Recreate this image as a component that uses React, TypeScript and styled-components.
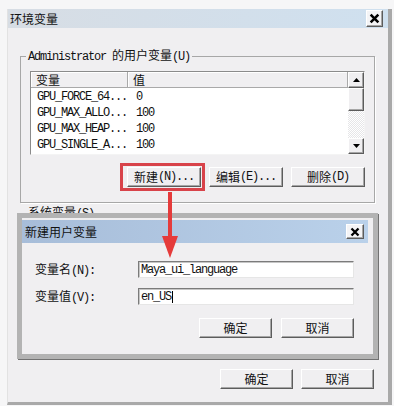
import React from "react";
import styled, { createGlobalStyle } from "styled-components";

const GlobalStyle = createGlobalStyle`
  html, body {
    margin: 0;
    padding: 0;
  }
  body {
    width: 394px;
    height: 406px;
    overflow: hidden;
    background: #f6f6f7;
    font-family: "Noto Sans CJK SC", "Liberation Sans", sans-serif;
    font-size: 12px;
    color: #111;
  }
`;

const Han = styled.span`
  font-family: "Noto Sans CJK SC", sans-serif;
  font-size: 12px;
`;

const Half = styled.span`
  font-family: "Liberation Mono", "DejaVu Sans Mono", monospace;
  font-size: 12px;
  letter-spacing: -1.2px;
`;

// SimSun look: CJK full width 12px, latin half width 6px
const Txt = ({ children }: { children: string }) => (
  <>
    {children
      .split(/([\u4e00-\u9fff]+)/)
      .filter(Boolean)
      .map((part, i) =>
        /[\u4e00-\u9fff]/.test(part) ? (
          <Han key={i}>{part}</Han>
        ) : (
          <Half key={i}>{part}</Half>
        )
      )}
  </>
);

const raised = `
  background: #f0eff1;
  border: 1px solid;
  border-color: #ffffff #5c5c5c #5c5c5c #ffffff;
  box-shadow: inset -1px -1px 0 #a6a6a6;
  box-sizing: border-box;
`;

const Window = styled.div`
  position: relative;
  margin: 9px 0 0 7px;
  width: 380px;
  height: 393px;
  border-left: 1px solid #e2e2e2;
  border-right: 4px solid #a9a9a9;
  border-bottom: 3px solid #a9a9a9;
  background: #f0eff1;
  display: flex;
  flex-direction: column;
`;

const TitleBar = styled.div`
  height: 19px;
  display: flex;
  align-items: center;
  justify-content: space-between;
  padding: 0 5px 0 2px;
  background: linear-gradient(90deg, #d7dde4, #cfe0ef);
  line-height: 14px;
`;

const CloseButton = styled.div<{ $w: number; $h: number }>`
  ${raised}
  width: ${(p) => p.$w}px;
  height: ${(p) => p.$h}px;
  display: flex;
  align-items: center;
  justify-content: center;
  background: #f4f4f6;
`;

const Group = styled.fieldset<{ $top: number; $height?: number }>`
  margin: ${(p) => p.$top}px 13px 0 12px;
  padding: 7px 9px 15px 9px;
  border: 1px solid #a7a7a7;
  box-shadow: 1px 1px 0 #ffffff;
  min-width: 0;
  box-sizing: border-box;
  ${(p) => (p.$height ? `height: ${p.$height}px;` : "")}
`;

const Legend = styled.legend`
  padding: 0 2px;
  margin-left: -4px;
  line-height: 14px;
`;

const List = styled.div`
  height: 84px;
  box-sizing: border-box;
  display: flex;
  border: 1px solid;
  border-color: #8b8b8b #f4f4f4 #f4f4f4 #8b8b8b;
  background: #fff;
`;

const ListMain = styled.div`
  flex: 1;
  display: flex;
  flex-direction: column;
`;

const HeaderRow = styled.div`
  display: grid;
  grid-template-columns: 97px 1fr;
  height: 15px;
  background: #f0eff1;
  border-bottom: 1px solid #a9a9a9;
`;

const HeaderCell = styled.div`
  display: flex;
  align-items: center;
  padding-left: 5px;
  border-right: 1px solid #a9a9a9;
  box-shadow: inset 1px 1px 0 #fff;
  line-height: 14px;
`;

const Row = styled.div`
  display: grid;
  grid-template-columns: 97px 1fr;
  height: 16px;
  align-items: center;
  &:first-of-type {
    margin-top: 2px;
  }
`;

const Cell = styled.div<{ $pad: number }>`
  padding-left: ${(p) => p.$pad}px;
  line-height: 14px;
  white-space: nowrap;
`;

const ScrollBar = styled.div`
  width: 16px;
  display: flex;
  flex-direction: column;
`;

const ScrollButton = styled.div`
  ${raised}
  height: 16px;
  display: flex;
  align-items: center;
  justify-content: center;
`;

const Thumb = styled.div`
  ${raised}
  height: 23px;
`;

const Track = styled.div`
  flex: 1;
  background: repeating-conic-gradient(#ffffff 0 25%, #e6e6e8 0 50%) 0 0 / 2px 2px;
`;

const ButtonRow = styled.div<{ $gap: number }>`
  display: flex;
  justify-content: flex-end;
  gap: ${(p) => p.$gap}px;
`;

const Button = styled.div<{ $w: number }>`
  ${raised}
  width: ${(p) => p.$w}px;
  height: 20px;
  display: flex;
  align-items: center;
  justify-content: center;
  line-height: 14px;
`;

const Highlight = styled.div`
  position: relative;
  &::after {
    content: "";
    position: absolute;
    top: -4px;
    left: -7px;
    right: -4px;
    bottom: -4px;
    border: 3px solid #d8434a;
  }
`;

const FooterRow = styled(ButtonRow)`
  margin: 12px 14px 0 0;
`;

const Dialog = styled.div`
  position: absolute;
  left: 9px;
  top: 204px;
  width: 361px;
  height: 146px;
  box-sizing: border-box;
  border: 5px solid #b3b3b3;
  box-shadow: 1px 1px 0 #727272;
  background: #f0eff1;
  padding: 2px 5px 0 0;
  display: flex;
  flex-direction: column;
`;

const DialogTitle = styled.div`
  height: 23px;
  display: flex;
  align-items: center;
  justify-content: space-between;
  padding: 0 4px 0 3px;
  background: linear-gradient(90deg, #a7bdd9, #bad1ea);
  line-height: 14px;
`;

const DialogBody = styled.div`
  padding: 18px 14px 0 13px;
  display: flex;
  flex-direction: column;
`;

const Fields = styled.div`
  display: grid;
  grid-template-columns: 103px 216px;
  row-gap: 10px;
  align-items: center;
  margin-bottom: 13px;
`;

const Label = styled.div`
  line-height: 14px;
`;

const Input = styled.div`
  height: 17px;
  box-sizing: border-box;
  background: #fff;
  border: 1px solid;
  border-color: #7b7b7b #e6e6e6 #e6e6e6 #7b7b7b;
  box-shadow: inset 1px 1px 0 #c6c6c6;
  padding-left: 2px;
  display: flex;
  align-items: center;
  line-height: 14px;
`;

const Caret = styled.span`
  display: inline-block;
  width: 1px;
  height: 12px;
  margin-left: 1px;
  background: #000;
`;

const Arrow = styled.svg`
  position: absolute;
  left: 152px;
  top: 181px;
  z-index: 2;
`;

const CloseIcon = ({ size }: { size: number }) => (
  <svg width={size} height={size} viewBox="0 0 10 10">
    <path d="M1.5 1.5 L8.5 8.5 M8.5 1.5 L1.5 8.5" stroke="#000" strokeWidth="2.3" />
  </svg>
);

const Tri = ({ up }: { up?: boolean }) => (
  <svg width="7" height="4" viewBox="0 0 7 4">
    <path d={up ? "M0 4 L3.5 0 L7 4Z" : "M0 0 L3.5 4 L7 0Z"} fill="#000" />
  </svg>
);

const rows = [
  ["GPU_FORCE_64...", "0"],
  ["GPU_MAX_ALLO...", "100"],
  ["GPU_MAX_HEAP...", "100"],
  ["GPU_SINGLE_A...", "100"],
];

export default function App() {
  return (
    <>
      <GlobalStyle />
      <Window>
        <TitleBar>
          <Txt>环境变量</Txt>
          <CloseButton $w={17} $h={17}>
            <CloseIcon size={11} />
          </CloseButton>
        </TitleBar>

        <Group $top={20}>
          <Legend>
            <Txt>Administrator 的用户变量(U)</Txt>
          </Legend>
          <List>
            <ListMain>
              <HeaderRow>
                <HeaderCell>
                  <Txt>变量</Txt>
                </HeaderCell>
                <HeaderCell>
                  <Txt>值</Txt>
                </HeaderCell>
              </HeaderRow>
              {rows.map(([name, value]) => (
                <Row key={name}>
                  <Cell $pad={6}>
                    <Txt>{name}</Txt>
                  </Cell>
                  <Cell $pad={8}>
                    <Txt>{value}</Txt>
                  </Cell>
                </Row>
              ))}
            </ListMain>
            <ScrollBar>
              <ScrollButton>
                <Tri up />
              </ScrollButton>
              <Thumb />
              <Track />
              <ScrollButton>
                <Tri />
              </ScrollButton>
            </ScrollBar>
          </List>
          <ButtonRow $gap={8} style={{ marginTop: 12 }}>
            <Highlight>
              <Button $w={74}>
                <Txt>新建(N)...</Txt>
              </Button>
            </Highlight>
            <Button $w={74}>
              <Txt>编辑(E)...</Txt>
            </Button>
            <Button $w={74}>
              <Txt>删除(D)</Txt>
            </Button>
          </ButtonRow>
        </Group>

        <Group $top={2} $height={152}>
          <Legend>
            <Txt>系统变量(S)</Txt>
          </Legend>
        </Group>

        <FooterRow $gap={8}>
          <Button $w={73}>
            <Txt>确定</Txt>
          </Button>
          <Button $w={73}>
            <Txt>取消</Txt>
          </Button>
        </FooterRow>

        <Dialog>
          <DialogTitle>
            <Txt>新建用户变量</Txt>
            <CloseButton $w={18} $h={15}>
              <CloseIcon size={10} />
            </CloseButton>
          </DialogTitle>
          <DialogBody>
            <Fields>
              <Label>
                <Txt>变量名(N):</Txt>
              </Label>
              <Input>
                <Txt>Maya_ui_language</Txt>
              </Input>
              <Label>
                <Txt>变量值(V):</Txt>
              </Label>
              <Input>
                <Txt>en_US</Txt>
                <Caret />
              </Input>
            </Fields>
            <ButtonRow $gap={9}>
              <Button $w={73}>
                <Txt>确定</Txt>
              </Button>
              <Button $w={73}>
                <Txt>取消</Txt>
              </Button>
            </ButtonRow>
          </DialogBody>
        </Dialog>

        <Arrow width="20" height="72" viewBox="0 0 20 72">
          <rect x="8" y="2" width="4" height="48" fill="#e53b3b" />
          <path d="M2 46 L18 46 L10 68 Z" fill="#e53b3b" />
        </Arrow>
      </Window>
    </>
  );
}
